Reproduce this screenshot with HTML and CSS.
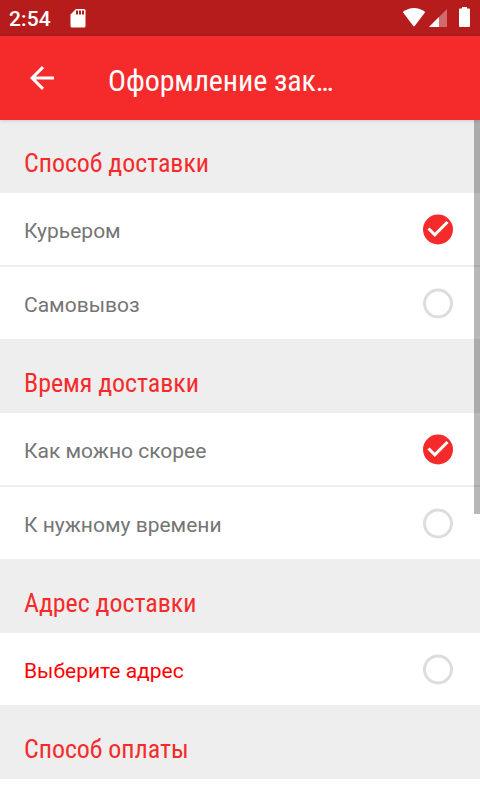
FILE: index.html
```
<!DOCTYPE html>
<html lang="ru">
<head>
    <meta charset="UTF-8">
    <meta name="viewport" content="width=device-width, initial-scale=1.0">
    <title>Оформление заказа</title>
    <link rel="stylesheet" href="styles.css">
</head>
<body>
    <div class="status-bar">
        <span class="clock">2:54</span>
        <svg class="sd-card" width="16" height="20" viewBox="0 0 16 20">
            <path fill="#fff" d="M6 0h8q1.500 0 1.500 1.500v15.500q0 1.500-1.500 1.500H2q-1.500 0-1.500-1.500V5.500z"/>
            <path fill="#b71c1c" d="M6 1.500h2v4H6zM9 1.500h2v4H9zM12 1.500h2v4h-2z"/>
        </svg>
        <svg class="status-icons" width="68" height="20" viewBox="0 0 68 20">
            <path fill="#fff" d="M.7 5Q12-3 23.300 5L12.500 19.300h-1z"/>
            <path fill="#fff" fill-opacity=".35" d="M45 2v18H27z"/>
            <path fill="#fff" d="M37 10v10H27z"/>
            <path fill="#fff" d="M60 0h5v1.500h2q1 0 1 1V19q0 1-1 1h-9q-1 0-1-1V2.500q0-1 1-1h2z"/>
        </svg>
    </div>

    <div class="toolbar">
        <svg class="back" width="24" height="24" viewBox="0 0 24 24">
            <path fill="none" stroke="#fff" stroke-width="3" d="M24 12H2M13 1.100L2.100 12L13 22.900"/>
        </svg>
        <h1 class="title">Оформление зак…</h1>
    </div>

    <div class="content">
        <h2 class="section">Способ доставки</h2>
        <div class="row">
            <span>Курьером</span>
            <svg class="check" width="30" height="31" viewBox="0 0 30 31">
                <circle cx="15" cy="15.500" r="15" fill="#f52b2b"/>
                <path fill="none" stroke="#fff" stroke-width="3" d="M5.500 14.500l6.300 6.300L24.500 8"/>
            </svg>
        </div>
        <div class="row">
            <span>Самовывоз</span>
            <svg class="check" width="30" height="31" viewBox="0 0 30 31">
                <circle cx="15" cy="15.500" r="13.500" fill="none" stroke="#ddd" stroke-width="3"/>
            </svg>
        </div>

        <h2 class="section">Время доставки</h2>
        <div class="row">
            <span>Как можно скорее</span>
            <svg class="check" width="30" height="31" viewBox="0 0 30 31">
                <circle cx="15" cy="15.500" r="15" fill="#f52b2b"/>
                <path fill="none" stroke="#fff" stroke-width="3" d="M5.500 14.500l6.300 6.300L24.500 8"/>
            </svg>
        </div>
        <div class="row">
            <span>К нужному времени</span>
            <svg class="check" width="30" height="31" viewBox="0 0 30 31">
                <circle cx="15" cy="15.500" r="13.500" fill="none" stroke="#ddd" stroke-width="3"/>
            </svg>
        </div>

        <h2 class="section">Адрес доставки</h2>
        <div class="row error">
            <span>Выберите адрес</span>
            <svg class="check" width="30" height="31" viewBox="0 0 30 31">
                <circle cx="15" cy="15.500" r="13.500" fill="none" stroke="#ddd" stroke-width="3"/>
            </svg>
        </div>

        <h2 class="section">Способ оплаты</h2>
        <div class="scrollbar"></div>
    </div>
</body>
</html>
```

FILE: styles.css
```
* {
    box-sizing: border-box;
}
body {
    display: flex;
    flex-direction: column;
    height: 800px;
    margin: 0;
    overflow: hidden;
    font-family: Roboto, sans-serif;
    background-color: #ffffff;
}
.status-bar {
    display: flex;
    align-items: flex-start;
    flex: none;
    height: 36px;
    padding: 7px 10px 0 9px;
    background: linear-gradient(#b71c1c 32px, #ab1c1c);
    color: #ffffff;
}
.clock {
    width: 61px;
    font-size: 21px;
    font-weight: 500;
    line-height: 24px;
    letter-spacing: 0.1px;
}
.sd-card {
    margin-top: 2px;
}
.status-icons {
    margin-left: auto;
}
.toolbar {
    display: flex;
    align-items: center;
    flex: none;
    position: relative;
    z-index: 1;
    height: 84px;
    padding-left: 30px;
    background-color: #f52b2b;
    color: #ffffff;
    box-shadow: 0 1px 3px rgba(0, 0, 0, 0.15);
}
.title {
    margin: 6px 0 0 54px;
    font-family: "Roboto Condensed", Roboto, sans-serif;
    font-size: 30px;
    font-weight: 400;
    font-stretch: 75%;
    line-height: 36px;
    letter-spacing: -0.1px;
    white-space: nowrap;
}
.content {
    position: relative;
    flex: 1;
    margin-top: -1px;
}
.section {
    height: 74px;
    margin: 0;
    padding: 28px 24px 0;
    font-family: "Roboto Condensed", Roboto, sans-serif;
    font-size: 26px;
    font-weight: 400;
    font-stretch: 75%;
    line-height: 32px;
    letter-spacing: -0.05px;
    white-space: nowrap;
    background-color: #eeeeee;
    color: #f52b2b;
}
.row {
    display: flex;
    align-items: flex-start;
    justify-content: space-between;
    height: 72px;
    padding: 21px 27px 0 24px;
    font-size: 21px;
    line-height: 25px;
    background-color: #ffffff;
    color: #757575;
}
.row + .row {
    height: 74px;
    border-top: 2px solid #eeeeee;
}
.row span {
    margin-top: 5px;
}
.error {
    color: #ff0000;
}
.check {
    flex: none;
}
/* scroll thumb lies over the list */
.scrollbar {
    position: absolute;
    top: 0;
    right: 0;
    width: 6px;
    height: 395px;
    background-color: rgba(0, 0, 0, 0.28);
}
```
